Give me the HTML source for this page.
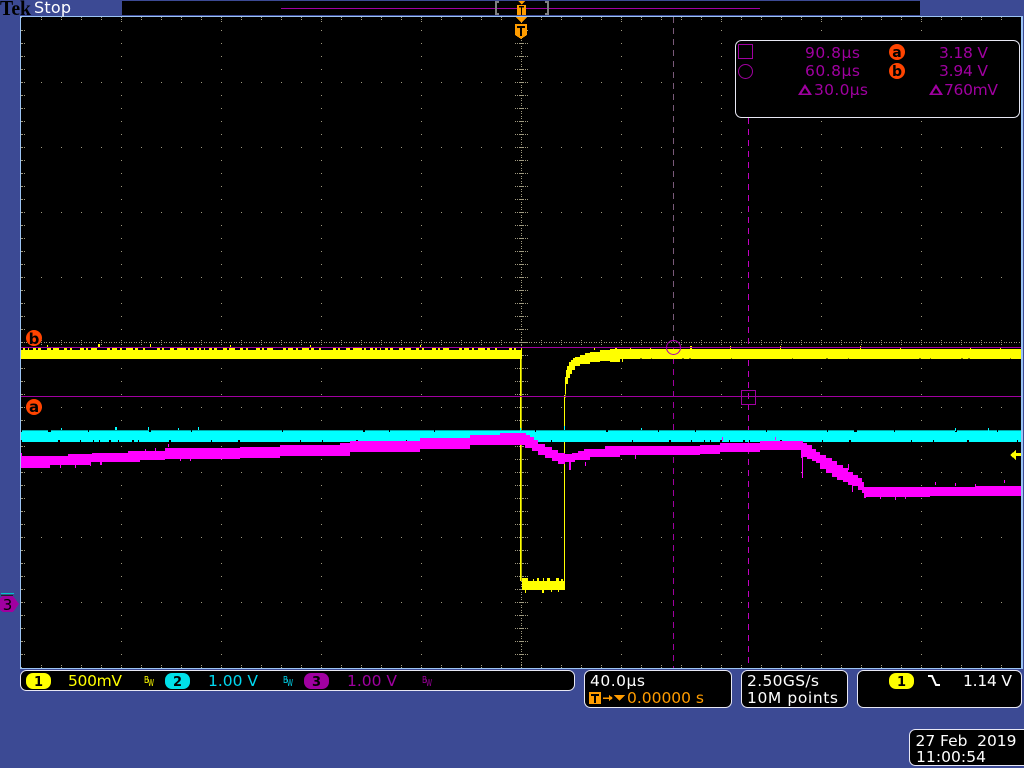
<!DOCTYPE html>
<html><head><meta charset="utf-8"><title>Tek Stop</title>
<style>html,body{margin:0;padding:0;background:#3c4a94;width:1024px;height:768px;overflow:hidden}svg{display:block}text{font-family:"DejaVu Sans","Liberation Sans",sans-serif;font-size:15.5px}</style></head>
<body>
<svg width="1024" height="768" viewBox="0 0 1024 768" xmlns="http://www.w3.org/2000/svg" shape-rendering="crispEdges">
<defs>
<pattern id="g1" x="21" y="17" width="20" height="65" patternUnits="userSpaceOnUse"><rect width="1" height="1" fill="#a09a80"/></pattern>
<pattern id="g2" x="21" y="17" width="100" height="13" patternUnits="userSpaceOnUse"><rect width="1" height="1" fill="#a09a80"/></pattern>
<pattern id="top" x="21" y="17" width="20" height="6" patternUnits="userSpaceOnUse"><rect y="0" width="1" height="1" fill="#a09a80"/><rect y="2" width="1" height="1" fill="#a09a80"/></pattern>
<pattern id="top2" x="21" y="17" width="100" height="8" patternUnits="userSpaceOnUse"><rect width="1" height="1" fill="#a09a80"/><rect y="2" width="1" height="1" fill="#a09a80"/><rect y="4" width="1" height="1" fill="#a09a80"/></pattern>
<pattern id="left" x="22" y="17" width="4" height="13" patternUnits="userSpaceOnUse"><rect width="1" height="1" fill="#a09a80"/><rect x="2" width="1" height="1" fill="#a09a80"/></pattern>
<pattern id="cx" x="21" y="342" width="5" height="2" patternUnits="userSpaceOnUse"><rect width="1" height="1" fill="#a09a80"/><rect x="3" width="1" height="1" fill="#a09a80"/></pattern>
<pattern id="cy" x="521" y="17" width="2" height="13" patternUnits="userSpaceOnUse"><rect width="1" height="1" fill="#a09a80"/><rect y="3" width="1" height="1" fill="#a09a80"/><rect y="5" width="1" height="1" fill="#a09a80"/><rect y="8" width="1" height="1" fill="#a09a80"/><rect y="10" width="1" height="1" fill="#a09a80"/></pattern>
<pattern id="cxt" x="21" y="340" width="20" height="5" patternUnits="userSpaceOnUse"><rect width="1" height="1" fill="#a09a80"/><rect y="4" width="1" height="1" fill="#a09a80"/></pattern>
<pattern id="cyt" x="515" y="17" width="13" height="13" patternUnits="userSpaceOnUse"><rect x="0" width="1" height="1" fill="#a09a80"/><rect x="2" width="1" height="1" fill="#a09a80"/><rect x="4" width="5" height="1" fill="#a09a80"/><rect x="10" width="1" height="1" fill="#a09a80"/><rect x="12" width="1" height="1" fill="#a09a80"/></pattern>
</defs>

<rect width="1024" height="768" fill="#3c4a94"/>
<rect x="122" y="1" width="798" height="14" fill="#000"/>
<rect x="281" y="8" width="479" height="1" fill="#a000a0"/>
<path d="M499 2h-3v12h3M545 2h3v12h-3" fill="none" stroke="#808080" stroke-width="2"/>

<rect x="21" y="17" width="1000" height="651" fill="#000"/>
<rect x="20" y="16" width="1002" height="1" fill="#9cc4f4"/>
<rect x="20" y="16" width="1" height="653" fill="#9cc4f4"/>
<rect x="20" y="668" width="1002" height="1" fill="#9cc4f4"/>
<rect x="1021" y="16" width="2" height="653" fill="#9cc4f4"/>

<rect x="21" y="17" width="1000" height="651" fill="url(#g1)"/>
<rect x="21" y="17" width="1000" height="651" fill="url(#g2)"/>
<rect x="41" y="17" width="980" height="3" fill="url(#top)"/>
<rect x="41" y="665" width="980" height="3" fill="url(#top)"/>
<rect x="121" y="17" width="900" height="5" fill="url(#top2)"/>
<rect x="121" y="663" width="900" height="5" fill="url(#top2)"/>
<rect x="22" y="30" width="3" height="637" fill="url(#left)"/>
<rect x="21" y="342" width="1000" height="1" fill="url(#cx)"/>
<rect x="41" y="340" width="980" height="5" fill="url(#cxt)"/>
<rect x="521" y="22" width="1" height="645" fill="url(#cy)"/>
<rect x="515" y="30" width="13" height="637" fill="url(#cyt)"/>

<!-- cursors vertical -->
<line x1="748.5" y1="118" x2="748.5" y2="668" stroke="#c000c0" stroke-width="1" stroke-dasharray="6 5"/>
<line x1="673.5" y1="17" x2="673.5" y2="347" stroke="#7a5a7a" stroke-width="1" stroke-dasharray="6 5"/>
<line x1="673.5" y1="347" x2="673.5" y2="668" stroke="#a000a0" stroke-width="1" stroke-dasharray="6 5"/>

<!-- yellow trace -->
<rect x="21" y="348" width="501" height="11" fill="#ffff00"/>
<line x1="21" y1="349" x2="521" y2="349" stroke="#000" stroke-width="2" stroke-dasharray="2 2 3 1 4 3 2 3 6 4 2 6 5 3 3 2 8 4 2 2 3 6 10 3 2 5 3 2 4 7 2 3 5 2 12 3 2 2 6 4 3 9 2 2 4 3"/>
<path d="M47 345h1v3h-1zM98 344h2v4h-2zM150 344h1v4h-1zM230 345h1v3h-1zM310 345h1v3h-1zM420 345h1v3h-1z" fill="#ffff00"/>
<path d="M98 359h1v3h-1zM150 359h1v3h-1zM33 359h1v1h-1z" fill="#000"/>
<path d="M565 392V377H566V376H565V376H566V370H567V366H569V362H571V360H573V358H575V357H580V355H585V353H590V352H600V350H610V349H1021V359H620V362H610V361H600V362H590V364H580V366H575V370H572V374H570V378H568V384H566V400Z" fill="#ffff00"/>
<line x1="640" y1="359" x2="1021" y2="359" stroke="#000" stroke-width="1" stroke-dasharray="2 9 1 30 2 5 2 40 1 60 1 33 2 20 1 70"/>
<path d="M594 347h1v3h-1zM615 347h2v2h-2zM630 347h1v2h-1zM650 347h1v2h-1zM690 346h2v3h-2zM730 346h1v3h-1zM780 346h1v3h-1zM860 346h1v3h-1zM900 347h1v2h-1zM970 347h1v2h-1zM1000 347h1v2h-1z" fill="#ffff00"/>
<path d="M612 359h1v3h-1zM622 359h1v3h-1z" fill="#ffff00"/>
<rect x="520" y="359" width="1" height="222" fill="#ffff00"/>
<rect x="521" y="359" width="1" height="222" fill="#b0b000"/>
<rect x="564" y="395" width="1" height="190" fill="#ffff00"/>
<rect x="522" y="581" width="43" height="9" fill="#ffff00"/>
<path d="M522 578h6v3h-6zM533 579h1v2h-1zM537 578h2v3h-2zM543 578h1v3h-1zM547 578h3v3h-3zM556 578h3v3h-3zM561 579h2v2h-2z" fill="#ffff00"/>
<path d="M525 590h1v3h-1zM542 590h2v3h-2zM551 590h1v2h-1zM558 590h1v2h-1z" fill="#ffff00"/>

<!-- cyan trace -->
<rect x="21" y="430" width="1000" height="12" fill="#00ffff"/>
<rect x="21" y="430" width="1000" height="1" fill="#00a8a8"/>
<line x1="21" y1="441" x2="1021" y2="441" stroke="#000" stroke-width="2" stroke-dasharray="1 36 2 20 1 12 1 5 1 9 2 7 1 13 2 4 1 30 2 40 1 26 2 60 1 21 1 33 2 48 1 27 1 17 2 44 1 19 2 31 1 80"/>
<line x1="21" y1="431" x2="1021" y2="431" stroke="#000" stroke-width="2" stroke-dasharray="1 26 3 37 1 60 2 40 1 90 1 80 2 24 1 44 1 100 1 70 2 50 1 36 1 70 1 60"/>
<path d="M520 428h1v3h-1zM564 426h1v4h-1zM988 428h1v3h-1zM148 427h1v3h-1zM61 428h1v2h-1zM115 427h2v3h-2zM178 428h1v2h-1zM198 427h1v3h-1zM955 428h1v3h-1zM641 428h1v2h-1z" fill="#00ffff"/>

<!-- magenta trace -->
<path d="M21 456H68V454H92V453H128V451H165V448H240V447H280V445H340V443H350V441H420V438H470V435H500V433H526V435H530V437H534V440H538V444H545V447H552V450H558V453H565V454H572V453H578V451H584V449H605V446H700V445H720V443H760V441H803V443H807V445H812V449H816V452H820V455H826V458H832V461H837V465H843V468H848V472H853V475H858V478H862V482H864V487H920V487H975V486H1021V496H930V497H865V493H862V490H858V486H853V485H848V482H843V480H837V477H832V473H826V469H820V463H816V461H812V459H807V457H803V450H760V452H720V454H700V455H620V457H590V460H575V462H565V464H558V461H552V458H545V455H538V451H532V448H525V445H470V449H420V452H350V456H280V458H240V459H165V460H140V462H90V465H50V468H21Z" fill="#ff00ff"/>
<path d="M802 450h1v28h-1zM801 450h2v8h-2zM864 490h2v8h-2zM569 462h2v8h-2zM21 456h1v-3h-1zM852 480h1v12h-1zM848 470h1v-6h-1zM832 470h1v5h-1zM722 441h1v-4h-1zM775 440h1v-3h-1zM1004 483h1v-3h-1zM635 455h1v4h-1zM585 462h1v4h-1zM60 465h1v3h-1zM75 465h1v3h-1zM90 462h1v4h-1zM100 462h2v3h-2zM145 452h1v-3h-1zM155 451h1v-3h-1zM168 447h1v-3h-1zM180 458h1v3h-1zM190 458h1v3h-1zM880 497h1v2h-1zM895 497h1v3h-1zM905 497h1v2h-1zM935 485h1v-3h-1zM955 486h1v-3h-1zM975 486h1v-2h-1z" fill="#ff00ff"/>

<!-- horizontal cursors -->
<rect x="21" y="347" width="1000" height="1" fill="#a000a0"/>
<rect x="21" y="396" width="1000" height="1" fill="#a000a0"/>
<rect x="741.500" y="390.500" width="14" height="14" fill="none" stroke="#a000a0"/>
<circle cx="673.500" cy="347.500" r="7" fill="none" stroke="#b000b0" shape-rendering="auto"/>

<!-- trigger level arrow -->
<path d="M1010 455L1016 450V453H1021V456H1016V460Z" fill="#ffff00"/>

<!-- a/b markers -->
<circle cx="34" cy="338" r="8" fill="#ff4400" shape-rendering="auto"/>
<text x="34" y="344" text-anchor="middle" style="font-size:15px;font-weight:bold" fill="#000">b</text>
<circle cx="34" cy="407" r="8" fill="#ff4400" shape-rendering="auto"/>
<text x="34" y="412" text-anchor="middle" style="font-size:15px;font-weight:bold" fill="#000">a</text>

<!-- Ch 3 marker -->
<rect x="1" y="593" width="13" height="1" fill="#00c8c8"/>
<rect x="1" y="595" width="12" height="1" fill="#222"/>
<path d="M0 598L3 596H13L19 604L13 612H3L0 610Z" fill="#a000a0"/>
<text x="7.500" y="610" text-anchor="middle" style="font-size:15px" fill="#000">3</text>

<!-- Tek Stop -->
<text x="0" y="15" style="font-family:'Liberation Serif',serif;font-size:21px;font-weight:bold" fill="#000" textLength="31" lengthAdjust="spacingAndGlyphs">Tek</text>
<text x="34" y="13" fill="#fff" style="font-size:16px" textLength="37">Stop</text>

<!-- trigger markers -->
<path d="M518 1H525L521.500 4.500Z" fill="#ff9c00"/>
<path d="M517 5H526V15H517Z" fill="#ff9c00"/>
<path d="M519 6H524V7.500H522V15H521V7.500H519Z" fill="#000"/>
<path d="M516 17H527L521.500 23Z" fill="#ff9c00"/>
<path d="M515 24H527V35L524 37L521 39L518 37L515 35Z" fill="#ff9c00"/>
<path d="M517 26H525V28H522V36H520V28H517Z" fill="#000"/>

<!-- measurement box -->
<rect x="735.500" y="40.500" width="284" height="77" rx="6" fill="#000" stroke="#e8e8f4" shape-rendering="auto"/>
<rect x="738.500" y="44.500" width="14" height="14" fill="none" stroke="#a000a0"/>
<circle cx="745.500" cy="71.500" r="7" fill="none" stroke="#a000a0" shape-rendering="auto"/>
<g fill="#a000a0">
<text x="805" y="58" textLength="55">90.8µs</text>
<text x="805" y="76" textLength="55">60.8µs</text>
<text x="939" y="58" textLength="49">3.18 V</text>
<text x="939" y="76" textLength="49">3.94 V</text>
<path d="M798 95L805 84L812 95ZM801.500 93.500H808.500L805 88Z" fill-rule="evenodd" shape-rendering="auto"/>
<text x="814" y="95" textLength="54">30.0µs</text>
<path d="M929 95L936 84L943 95ZM932.500 93.500H939.500L936 88Z" fill-rule="evenodd" shape-rendering="auto"/>
<text x="944" y="95" textLength="54">760mV</text>
</g>
<circle cx="897" cy="52" r="8" fill="#ff4400" shape-rendering="auto"/>
<text x="897" y="57" text-anchor="middle" style="font-size:14px;font-weight:bold" fill="#000">a</text>
<circle cx="897" cy="71" r="8" fill="#ff4400" shape-rendering="auto"/>
<text x="897" y="76" text-anchor="middle" style="font-size:14px;font-weight:bold" fill="#000">b</text>

<!-- bottom channel bar -->
<rect x="20.500" y="670.500" width="554" height="20" rx="6" fill="#000" stroke="#e8e8f4" shape-rendering="auto"/>
<rect x="26" y="673" width="25" height="16" rx="7" fill="#ffff00" shape-rendering="auto"/>
<text x="38.500" y="686" text-anchor="middle" fill="#000" style="font-weight:bold;font-size:13px">1</text>
<text x="68" y="686" fill="#ffff00" textLength="54">500mV</text>
<text x="144" y="683" fill="#ffff00" style="font-size:10px" textLength="5" lengthAdjust="spacingAndGlyphs">B</text><text x="148" y="686" fill="#ffff00" style="font-size:10px" textLength="6" lengthAdjust="spacingAndGlyphs">W</text>
<rect x="165" y="673" width="25" height="16" rx="7" fill="#00e0e8" shape-rendering="auto"/>
<text x="177.500" y="686" text-anchor="middle" fill="#000" style="font-weight:bold;font-size:13px">2</text>
<text x="208" y="686" fill="#00d8f0" textLength="50">1.00 V</text>
<text x="283" y="683" fill="#00d8f0" style="font-size:10px" textLength="5" lengthAdjust="spacingAndGlyphs">B</text><text x="287" y="686" fill="#00d8f0" style="font-size:10px" textLength="6" lengthAdjust="spacingAndGlyphs">W</text>
<rect x="304" y="673" width="25" height="16" rx="7" fill="#a000a0" shape-rendering="auto"/>
<text x="316.500" y="686" text-anchor="middle" fill="#000" style="font-weight:bold;font-size:13px">3</text>
<text x="347" y="686" fill="#a000a0" textLength="50">1.00 V</text>
<text x="422" y="683" fill="#a000a0" style="font-size:10px" textLength="5" lengthAdjust="spacingAndGlyphs">B</text><text x="426" y="686" fill="#a000a0" style="font-size:10px" textLength="6" lengthAdjust="spacingAndGlyphs">W</text>

<!-- timebase box -->
<rect x="584.500" y="670.500" width="147" height="37" rx="6" fill="#000" stroke="#e8e8f4" shape-rendering="auto"/>
<text x="590" y="686" fill="#fff" textLength="55">40.0µs</text>
<rect x="589" y="692" width="12" height="12" fill="#ff9c00"/>
<path d="M591 694H599V696H596V703H594V696H591Z" fill="#000"/>
<path d="M603 697.500H610V699H603ZM609 695L613 698L609 701Z" fill="#ff9c00"/>
<path d="M614 695H625L619.500 701Z" fill="#ff9c00"/>
<text x="627" y="703" fill="#ff9c00" textLength="77">0.00000 s</text>

<rect x="741.500" y="670.500" width="106" height="37" rx="6" fill="#000" stroke="#e8e8f4" shape-rendering="auto"/>
<text x="747" y="686" fill="#fff" textLength="72">2.50GS/s</text>
<text x="747" y="703" fill="#fff" textLength="91">10M points</text>

<rect x="857.500" y="670.500" width="164" height="37" rx="6" fill="#000" stroke="#e8e8f4" shape-rendering="auto"/>
<rect x="889" y="673" width="25" height="16" rx="7" fill="#ffff00" shape-rendering="auto"/>
<text x="901.500" y="686" text-anchor="middle" fill="#000" style="font-weight:bold;font-size:13px">1</text>
<path d="M928 676H932L936 685H940" fill="none" stroke="#fff" stroke-width="2" shape-rendering="auto"/>
<text x="963" y="686" fill="#fff" textLength="49">1.14 V</text>

<rect x="909.500" y="729.500" width="120" height="36" rx="6" fill="#000" stroke="#e8e8f4" shape-rendering="auto"/>
<text x="915.500" y="746" fill="#fff" textLength="101">27 Feb&#160;&#160;2019</text>
<text x="916" y="762" fill="#fff" textLength="70">11:00:54</text>
</svg>
</body></html>
